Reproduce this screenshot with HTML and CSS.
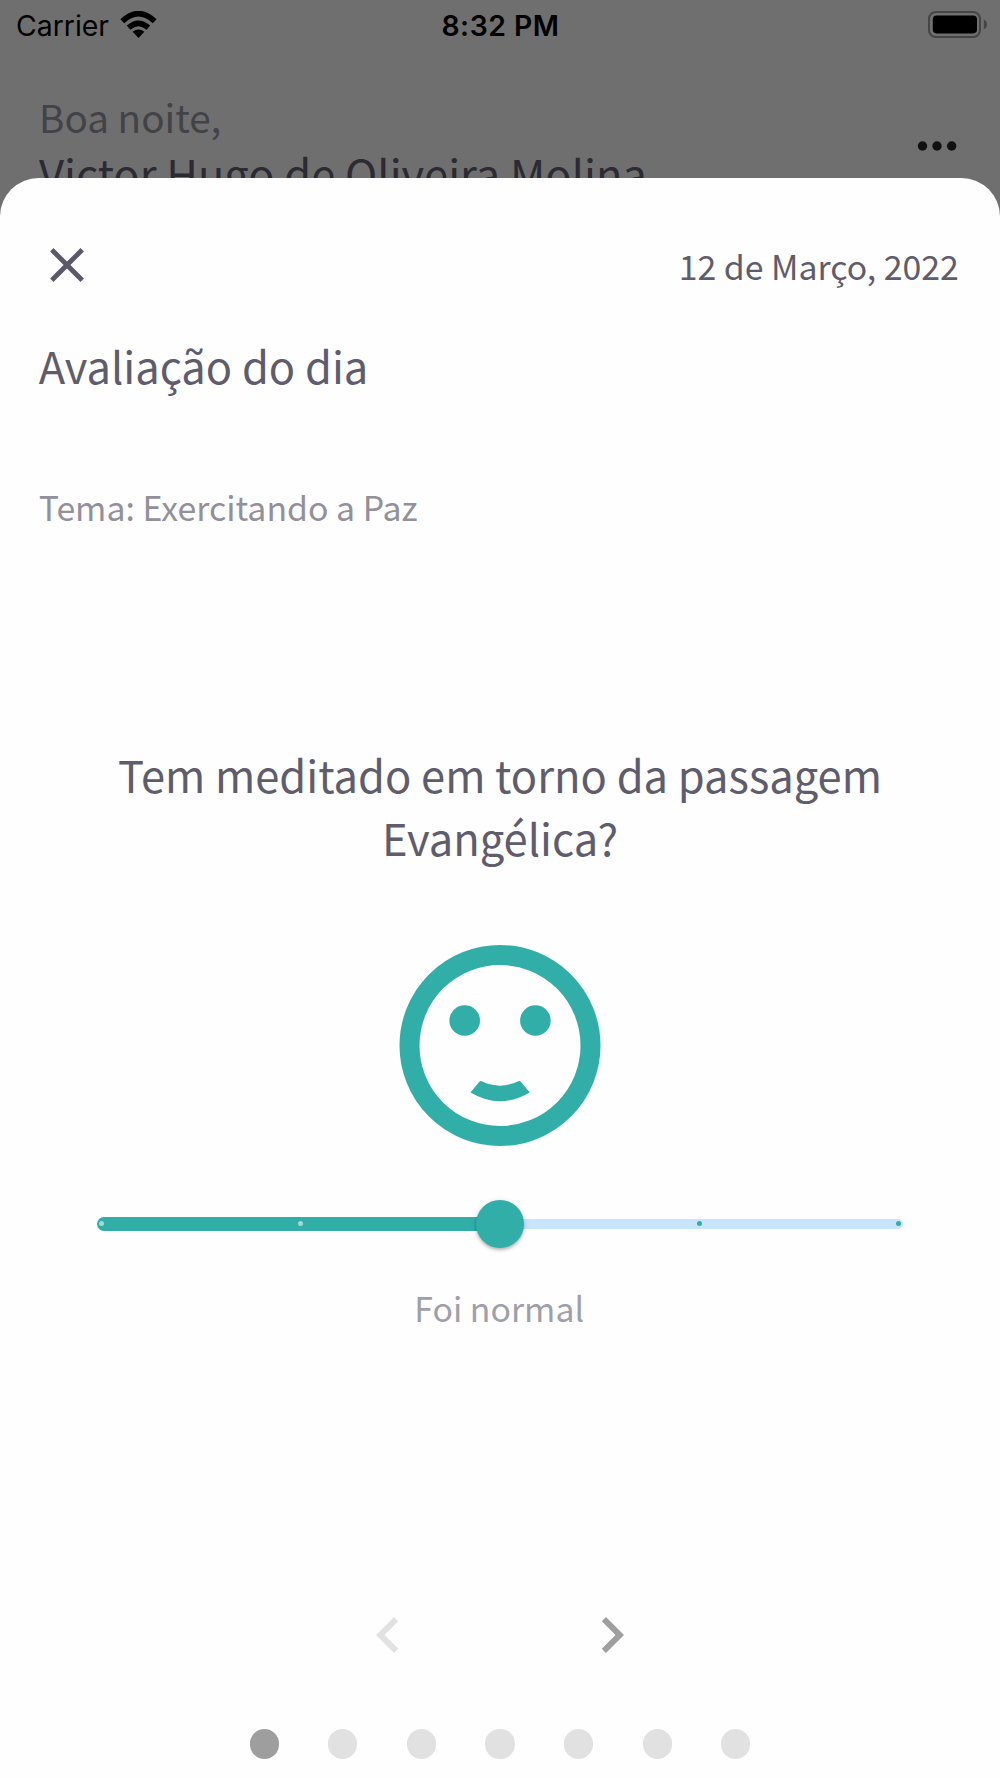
FILE: index.html
```html
<!DOCTYPE html>
<html lang="pt-BR">
<head>
<meta charset="utf-8">
<title>Avaliação do dia</title>
<link rel="stylesheet" href="styles.css">
</head>
<body>
<div class="screen">
  <div class="backdrop">
    <div class="status">
      <div class="status-left">
        <span>Carrier</span>
        <svg class="wifi" viewBox="0 0 37 27" width="37" height="27">
          <path d="M2.3 10.3Q18.5-5 34.7 10.3" fill="none" stroke="#000" stroke-width="5.6"/>
          <path d="M8.6 16.7Q18.5 8 28.4 16.7" fill="none" stroke="#000" stroke-width="5.6"/>
          <path d="M12.6 20.8Q18.5 16.4 24.4 20.8L18.5 26.9Z"/>
        </svg>
      </div>
      <span class="clock">8:32 PM</span>
      <div class="status-right">
        <svg class="battery" viewBox="0 0 59 27" width="59" height="27">
          <rect x="1" y="1" width="51" height="25" rx="6.8" fill="none" stroke="#454545" stroke-width="2"/>
          <rect x="4.8" y="4.4" width="44.2" height="18" rx="3.8"/>
          <path d="M55.8 8.4Q59 10 59 13.4T55.8 18.4Z" fill="#454545"/>
        </svg>
      </div>
    </div>
    <div class="greeting">
      <div>
        <p class="hello">Boa noite,</p>
        <p class="name">Victor Hugo de Oliveira Molina</p>
      </div>
      <svg class="more" viewBox="0 0 40 10" width="40" height="10" fill="#111">
        <circle cx="5.5" cy="5" r="4.7"/><circle cx="20" cy="5" r="4.7"/><circle cx="34.7" cy="5" r="4.7"/>
      </svg>
    </div>
  </div>
  <main class="sheet">
    <header class="sheet-head">
      <svg class="close" viewBox="0 0 24 24" width="58" height="58"><path d="M19 6.41L17.59 5 12 10.59 6.41 5 5 6.41 10.59 12 5 17.59 6.41 19 12 13.41 17.59 19 19 17.59 13.41 12z"/></svg>
      <span class="date">12 de Março, 2022</span>
    </header>
    <h1 class="title">Avaliação do dia</h1>
    <p class="theme">Tema: Exercitando a Paz</p>
    <h2 class="question">Tem meditado em torno da passagem Evangélica?</h2>
    <svg class="face" viewBox="0 0 202 201" width="202" height="201">
      <circle cx="101" cy="100.500" r="90.500" fill="none" stroke="#32aea9" stroke-width="20"/>
      <circle cx="65.700" cy="75.500" r="15.300"/><circle cx="136.400" cy="75.500" r="15.300"/>
      <path d="M80.500 136.600Q81.500 135.600 82.800 136.300Q101 145 119.400 136.300Q120.700 135.600 121.700 136.600L130.700 147.500Q101 165 71.500 147.500Z"/>
    </svg>
    <div class="slider">
      <div class="track-done"><i></i><i></i></div>
      <div class="thumb"></div>
      <div class="track-left"><i></i><i></i></div>
    </div>
    <p class="answer">Foi normal</p>
    <nav class="arrows">
      <svg viewBox="0 0 24 24" width="72" height="72" fill="#e1e1e1"><path d="M15.41 7.41L14 6l-6 6 6 6 1.41-1.41L10.83 12z"/></svg>
      <svg viewBox="0 0 24 24" width="72" height="72" fill="#9e9e9e"><path d="M10 6L8.59 7.41 13.17 12l-4.580 4.590L10 18l6-6z"/></svg>
    </nav>
    <div class="dots"><i class="on"></i><i></i><i></i><i></i><i></i><i></i><i></i></div>
  </main>
</div>
</body>
</html>
```
FILE: styles.css
```css
* { box-sizing: border-box; margin: 0; padding: 0; }
body {
  background: #6f6f6f;
  font-family: "Noto Sans CJK JP", "Noto Sans", sans-serif;
  color: #5f5c6c;
}
svg { display: block; flex: none; }
h1, h2 { font-weight: 400; }
.screen { width: 1000px; height: 1778px; overflow: hidden; display: flex; flex-direction: column; }

.backdrop { height: 178px; flex: none; overflow: hidden; }
.status {
  height: 52px;
  padding: 0 13px 0 16px;
  display: grid;
  grid-template-columns: 1fr auto 1fr;
  align-items: center;
  font-family: Inter, "Liberation Sans", sans-serif;
  font-size: 28.4px;
  line-height: 52px;
  color: #000;
}
.status-left { display: flex; align-items: center; gap: 11px; }
.wifi { margin-top: -4px; }
.battery { margin-top: -3px; }
.clock { font-weight: 600; letter-spacing: 0.5px; transform: translateX(-1px); }
.status-right { display: flex; justify-content: flex-end; }
.greeting {
  display: flex;
  justify-content: space-between;
  align-items: flex-start;
  padding: 37.2px 43px 0 39px;
}
.hello { font-size: 38.65px; line-height: 54.5px; color: #434247; }
.name { margin-top: -1.7px; font-size: 43.48px; line-height: 63px; color: #2c2a32; white-space: nowrap; }
.more { margin-top: 52.3px; }

.sheet {
  flex: 1;
  background: #fefefe;
  border-radius: 38.65px 38.65px 0 0;
  padding: 57.7px 38.65px 0;
  display: flex;
  flex-direction: column;
}
.sheet-head { display: flex; align-items: center; justify-content: space-between; height: 58px; padding-right: 2.5px; }
.close { fill: #5b5868; margin-left: -0.4px; }
.date { margin-top: 1.4px; font-size: 33.82px; line-height: 49px; }
.title { margin-top: 40px; font-size: 43.48px; line-height: 63px; }
.theme { margin-top: 85.7px; font-size: 33.82px; line-height: 49px; color: #92909a; }
.question { margin-top: 211.2px; font-size: 43.48px; line-height: 63px; text-align: center; }
.face { margin: 76.4px auto 0; fill: #32aea9; }
.slider { margin: 54px 19px 0 58px; width: 806.4px; height: 48px; display: flex; align-items: center; }
.slider i { width: 5px; height: 5px; border-radius: 50%; }
.track-done {
  width: 403.3px; height: 14.4px; margin-right: -24px; padding: 0 171px 0 2.2px;
  background: #32aea9; border-radius: 7px 0 0 7px;
  display: flex; align-items: center; gap: 194.2px;
}
.track-done i { background: #a3dad7; flex: none; }
.thumb {
  width: 48px; height: 48px; flex: none; border-radius: 50%; background: #32aea9; z-index: 1;
  box-shadow: 0 2px 3px rgba(0, 0, 0, .22), 0 1px 6px rgba(0, 0, 0, .12);
}
.track-left {
  width: 403px; height: 10px; margin-left: -24px; padding-right: 2px;
  background: #c9e5fb; border-radius: 0 5px 5px 0;
  display: flex; align-items: center; justify-content: flex-end; gap: 194.2px;
}
.track-left i { background: #32aea9; }
.answer { margin: 34.9px 1.6px 0 0; font-size: 33.82px; line-height: 49px; text-align: center; color: #a09ea7; }
.arrows { margin-top: 267.4px; display: flex; justify-content: center; gap: 152px; }
.dots { margin-top: 58px; display: flex; justify-content: center; gap: 49.3px; }
.dots i { width: 29.3px; height: 29.3px; border-radius: 50%; background: #e1e1e1; }
.dots .on { background: #9e9e9e; }
```
